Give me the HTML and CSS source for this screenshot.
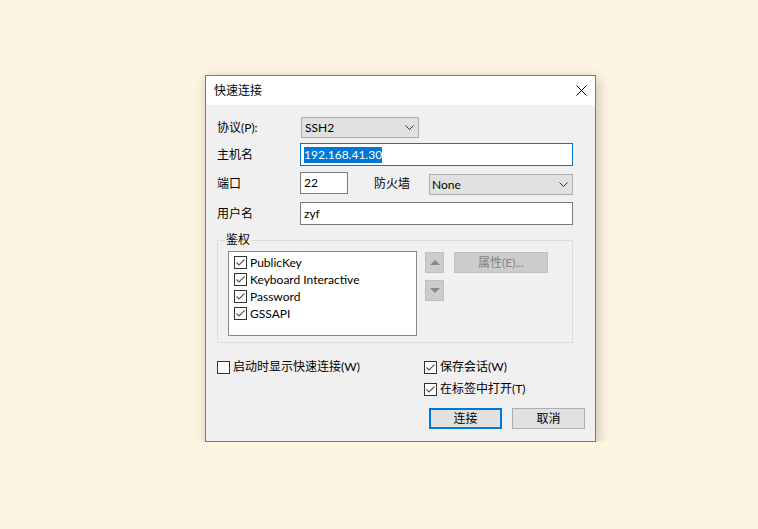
FILE: index.html
```html
<!DOCTYPE html>
<html lang="zh-CN">
<head>
  <meta charset="UTF-8">
  <title>快速连接</title>
  <link rel="stylesheet" href="styles.css">
</head>
<body>
  <div class="dialog">
    <div class="titlebar">
      <span class="title">快速连接</span>
      <svg class="close" width="11" height="11" viewBox="0 0 11 11">
        <path d="M0.5 0.5 L10.5 10.5 M10.5 0.5 L0.5 10.5" stroke="#000" stroke-width="1" fill="none"/>
      </svg>
    </div>

    <div class="content">
      <!-- 协议 -->
      <div class="row r1">
        <label class="lbl">协议(P):</label>
        <div class="combo proto">
          <span>SSH2</span>
          <svg width="9" height="5" viewBox="0 0 9 5"><path d="M0.5 0.5 L4.5 4.5 L8.5 0.5" stroke="#333" fill="none"/></svg>
        </div>
      </div>
      <div class="row r2">
        <label class="lbl">主机名</label>
        <div class="field host"><span class="sel">192.168.41.30</span></div>
      </div>
      <div class="row r3">
        <label class="lbl">端口</label>
        <div class="field port">22</div>
        <label class="fw">防火墙</label>
        <div class="combo firewall">
          <span>None</span>
          <svg width="9" height="5" viewBox="0 0 9 5"><path d="M0.5 0.5 L4.5 4.5 L8.5 0.5" stroke="#333" fill="none"/></svg>
        </div>
      </div>
      <div class="row r4">
        <label class="lbl">用户名</label>
        <div class="field user">zyf</div>
      </div>

      <!-- 鉴权 -->
      <fieldset class="auth">
        <legend>鉴权</legend>
        <div class="auth-body">
          <div class="list">
            <div class="item"><span class="box checked"></span>PublicKey</div>
            <div class="item"><span class="box checked"></span>Keyboard Interactive</div>
            <div class="item"><span class="box checked"></span>Password</div>
            <div class="item"><span class="box checked"></span>GSSAPI</div>
          </div>
          <div class="arrows">
            <div class="arrow-btn"><span class="tri up"></span></div>
            <div class="arrow-btn"><span class="tri down"></span></div>
          </div>
          <div class="props">属性(E)...</div>
        </div>
      </fieldset>

      <div class="options">
        <div class="opt-left">
          <div class="check"><span class="box"></span>启动时显示快速连接(W)</div>
        </div>
        <div class="opt-right">
          <div class="check"><span class="box checked"></span>保存会话(W)</div>
          <div class="check"><span class="box checked"></span>在标签中打开(T)</div>
          <div class="buttons">
            <div class="btn primary">连接</div>
            <div class="btn">取消</div>
          </div>
        </div>
      </div>
    </div>
  </div>
</body>
</html>
```

FILE: styles.css
```css
body {
  margin: 0;
  padding: 0;
  background-color: #FDF5E2;
  font-family: Lato, "Noto Sans CJK SC", sans-serif;
  font-size: 12px;
  line-height: 16px;
  color: #000;
}

.dialog {
  width: 389px;
  height: 365px;
  margin: 75px 0 0 205px;
  border: 1px solid #7A7A7A;
  background-color: #F0F0F0;
  box-shadow: 2px 3px 12px rgba(0, 0, 0, 0.22);
}

.titlebar {
  height: 29px;
  background-color: #FFF;
  display: flex;
  align-items: center;
  padding-left: 8px;
}

.titlebar .title {
  flex: 1;
}

.titlebar .close {
  margin-right: 8px;
}

.content {
  padding: 12px 10px 0 11px;
}

.row {
  display: flex;
  align-items: center;
  width: 356px;
}

.r1 { height: 21px; }
.r2 { height: 23px; margin-top: 5px; }
.r3 { height: 22px; margin-top: 6px; align-items: flex-start; }
.r4 { height: 23px; margin-top: 8px; }

.lbl {
  width: 83px;
  flex: none;
}

.r3 .lbl,
.r3 .fw {
  line-height: 24px;
}

.combo {
  display: flex;
  align-items: center;
  justify-content: space-between;
  box-sizing: border-box;
  height: 21px;
  padding: 0 4px 0 3px;
  background-color: #E1E1E1;
  border: 1px solid #ADADAD;
}

.combo.proto {
  width: 118px;
  margin-left: 1px;
}

.combo.firewall {
  width: 144px;
  margin-top: 2px;
  padding-left: 2px;
}

.field {
  box-sizing: border-box;
  height: 100%;
  padding: 0 3px;
  background-color: #FFF;
  border: 1px solid #7A7A7A;
  display: flex;
  align-items: center;
}

.field.host {
  width: 273px;
  border-color: #0078D7;
}

.field.host .sel {
  background-color: #0078D7;
  color: #FFF;
}

.field.port {
  width: 48px;
}

.fw {
  margin-left: 26px;
  width: 55px;
}

.field.user {
  width: 273px;
}

.auth {
  width: 356px;
  box-sizing: border-box;
  margin: 8px 0 0 0;
  padding: 4px 0 6px 0;
  border: 1px solid #DCDCDC;
  min-width: 0;
}

.auth legend {
  margin-left: 7px;
  padding: 0 1px;
  line-height: 14px;
}

.auth-body {
  display: flex;
  align-items: flex-start;
  padding-left: 10px;
}

.list {
  box-sizing: border-box;
  width: 189px;
  height: 85px;
  padding: 2px 5px;
  background-color: #FFF;
  border: 1px solid #828790;
}

.item {
  display: flex;
  align-items: center;
  height: 17px;
}

.box {
  box-sizing: border-box;
  width: 13px;
  height: 13px;
  margin-right: 3px;
  flex: none;
  border: 1px solid #333;
  background-color: #FFF;
}

.box.checked {
  background: #FFF url("data:image/svg+xml;utf8,<svg xmlns='http://www.w3.org/2000/svg' width='11' height='11'><path d='M1.5 5.5 L4 8 L9.5 2.5' stroke='%23555' stroke-width='1.1' fill='none'/></svg>") no-repeat center;
}

.arrows {
  margin: 1px 0 0 8px;
  display: flex;
  flex-direction: column;
  gap: 7px;
}

.arrow-btn {
  box-sizing: border-box;
  width: 19px;
  height: 21px;
  background-color: #CCC;
  border: 1px solid #BFBFBF;
  display: flex;
  align-items: center;
  justify-content: center;
}

.tri {
  width: 0;
  height: 0;
  border-left: 5px solid transparent;
  border-right: 5px solid transparent;
}

.tri.up {
  border-bottom: 5px solid #888;
}

.tri.down {
  border-top: 5px solid #888;
}

.props {
  box-sizing: border-box;
  width: 94px;
  height: 21px;
  margin: 1px 0 0 10px;
  background-color: #CCC;
  border: 1px solid #BFBFBF;
  color: #838383;
  text-align: center;
  line-height: 19px;
}

.options {
  display: flex;
  margin-top: 13px;
}

.opt-left {
  width: 207px;
}

.check {
  display: flex;
  align-items: center;
  height: 22px;
}

.check .box {
  margin-right: 3px;
}

.buttons {
  display: flex;
  gap: 10px;
  margin: 8px 0 0 5px;
}

.btn {
  box-sizing: border-box;
  width: 73px;
  height: 21px;
  background-color: #E1E1E1;
  border: 1px solid #ADADAD;
  text-align: center;
  line-height: 19px;
}

.btn.primary {
  border: 2px solid #0078D7;
  line-height: 17px;
}
```
